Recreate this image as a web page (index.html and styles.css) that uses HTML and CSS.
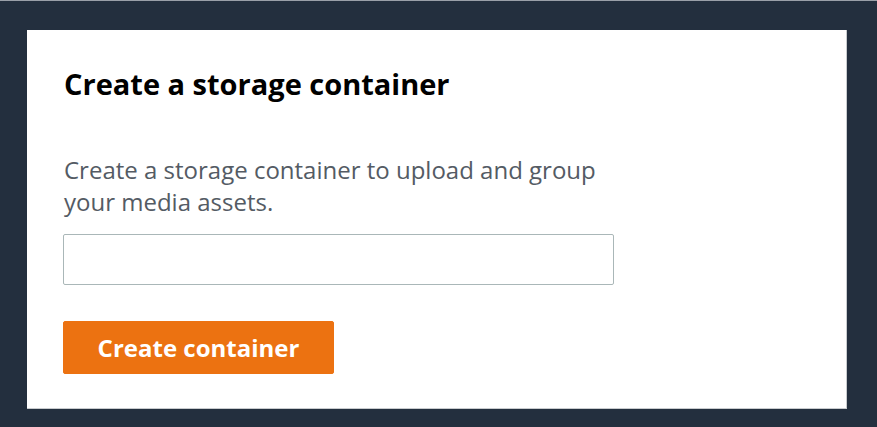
FILE: index.html
```html
<!DOCTYPE html>
<html>
<head>
<meta charset="utf-8">
<link rel="stylesheet" href="styles.css">
</head>
<body>
<div class="frame">
  <div class="card">
    <h1 class="title">Create a storage container</h1>
    <p class="desc">Create a storage container to upload and group your media assets.</p>
    <input class="field" type="text">
    <button class="btn">Create container</button>
  </div>
</div>
</body>
</html>
```
FILE: styles.css
```css
html, body {
  margin: 0;
  padding: 0;
  background: #232f3e;
}
.frame {
  width: 877px;
  height: 427px;
  box-sizing: border-box;
  padding: 29px 30px 18px 27px;
  border-top: 1px solid #9aa0a8;
}
.card {
  background: #ffffff;
  height: 379px;
  box-sizing: border-box;
  padding: 0 0 0 37px;
  display: flex;
  flex-direction: column;
  align-items: flex-start;
  font-family: "Open Sans", sans-serif;
  border-bottom: 1px solid #c8cbce;
  border-right: 1px solid #c8cbce;
}
.title {
  margin: 34px 0 0 0;
  font-size: 29px;
  line-height: 40px;
  font-weight: 700;
  color: #000;
}
.desc {
  margin: 50px 0 0 0;
  width: 560px;
  font-size: 24px;
  line-height: 32px;
  color: #545b64;
}
.field {
  margin: 16px 0 0 -1px;
  width: 551px;
  height: 51px;
  box-sizing: border-box;
  border: 1px solid #aab7b8;
  border-radius: 2px;
  background: #fff;
}
.btn {
  margin: 36px 0 0 -1px;
  width: 271px;
  height: 53px;
  background: #ec7211;
  border: 1px solid #ec7211;
  border-radius: 2px;
  color: #fff;
  font-family: "Open Sans", sans-serif;
  font-weight: 700;
  font-size: 24px;
  padding: 0;
}
```
